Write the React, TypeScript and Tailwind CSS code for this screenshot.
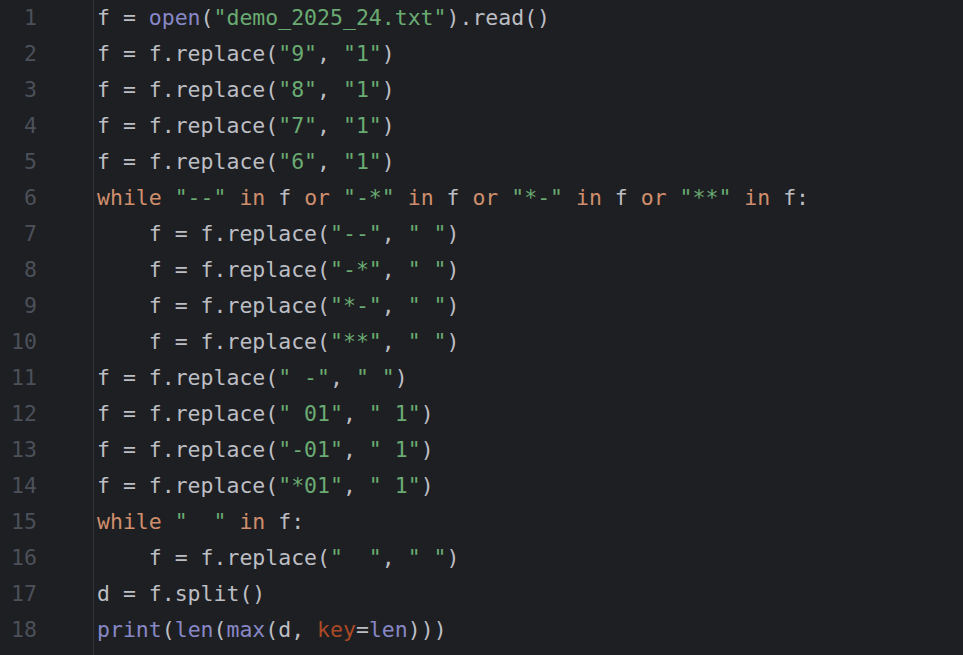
import React from 'react';

type Kind = 't' | 'k' | 's' | 'b' | 'p';
type Tok = [Kind, string];

const COLORS: Record<Kind, string> = {
  t: 'text-[#bcbec4]',
  k: 'text-[#cf8e6d]',
  s: 'text-[#6aab73]',
  b: 'text-[#8888c6]',
  p: 'text-[#aa4926]',
};

const rep = (indent: string, a: string, b: string): Tok[] => [
  ['t', `${indent}f = f.replace(`],
  ['s', `"${a}"`],
  ['t', ', '],
  ['s', `"${b}"`],
  ['t', ')'],
];

const LINES: Tok[][] = [
  [['t', 'f = '], ['b', 'open'], ['t', '('], ['s', '"demo_2025_24.txt"'], ['t', ').read()']],
  rep('', '9', '1'),
  rep('', '8', '1'),
  rep('', '7', '1'),
  rep('', '6', '1'),
  [
    ['k', 'while '], ['s', '"--"'], ['k', ' in '], ['t', 'f '], ['k', 'or '],
    ['s', '"-*"'], ['k', ' in '], ['t', 'f '], ['k', 'or '],
    ['s', '"*-"'], ['k', ' in '], ['t', 'f '], ['k', 'or '],
    ['s', '"**"'], ['k', ' in '], ['t', 'f:'],
  ],
  rep('    ', '--', ' '),
  rep('    ', '-*', ' '),
  rep('    ', '*-', ' '),
  rep('    ', '**', ' '),
  rep('', ' -', ' '),
  rep('', ' 01', ' 1'),
  rep('', '-01', ' 1'),
  rep('', '*01', ' 1'),
  [['k', 'while '], ['s', '"  "'], ['k', ' in '], ['t', 'f:']],
  rep('    ', '  ', ' '),
  [['t', 'd = f.split()']],
  [
    ['b', 'print'], ['t', '('], ['b', 'len'], ['t', '('], ['b', 'max'], ['t', '(d, '],
    ['p', 'key'], ['t', '='], ['b', 'len'], ['t', ')))'],
  ],
];

export default function App() {
  return (
    <div className="w-[963px] h-[655px] overflow-hidden bg-[#1e1f22] flex font-['DejaVu_Sans_Mono',monospace] text-[21.5px] leading-[36px]">
      <div className="w-[93px] shrink-0 pr-[56px] text-right text-[#4b5059]">
        {LINES.map((_, i) => (
          <div key={i} className="h-9">{i + 1}</div>
        ))}
      </div>
      <div className="flex-1 border-l border-[#313438] pl-[3px] whitespace-pre">
        {LINES.map((line, i) => (
          <div key={i} className="h-9">
            {line.map(([kind, text], j) => (
              <span key={j} className={COLORS[kind]}>{text}</span>
            ))}
          </div>
        ))}
      </div>
    </div>
  );
}
